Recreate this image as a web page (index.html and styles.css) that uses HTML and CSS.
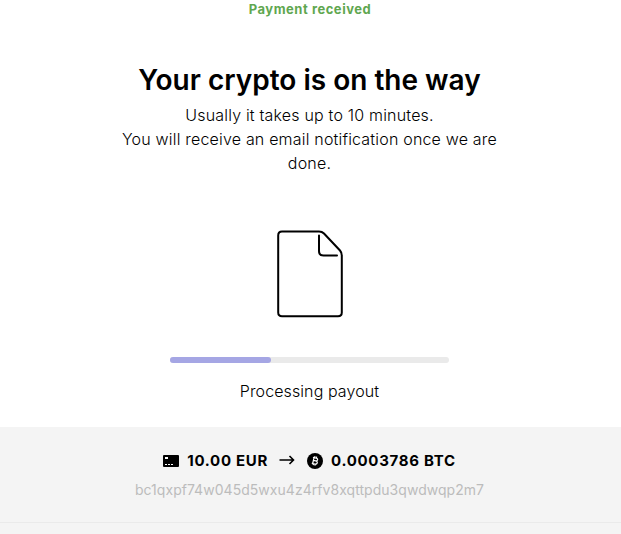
FILE: index.html
```html
<!DOCTYPE html>
<html lang="en">
<head>
    <meta charset="UTF-8">
    <meta name="viewport" content="width=device-width, initial-scale=1.0">
    <title>Payment received</title>
    <link rel="stylesheet" href="styles.css">
</head>
<body>
    <main>
        <p class="status">Payment received</p>
        <h1>Your crypto is on the way</h1>
        <p class="message">
            Usually it takes up to 10 minutes.<br>
            You will receive an email notification once we are done.
        </p>
        <svg class="document" viewBox="0 0 66 88" fill="none" stroke="#000" stroke-width="2" stroke-linecap="round">
            <path d="M5 1.500H42Q45 1.500 47 3.500L63 20.500Q64.800 22.500 64.800 25.500V82.500Q64.800 86.300 61 86.300H5Q1.200 86.300 1.200 82.500V5.500Q1.200 1.500 5 1.500Z"/>
            <path d="M42 5.500V21Q42 25.500 46.500 25.500H60"/>
        </svg>
        <div class="progress">
            <div class="bar" style="width: 36.200%"></div>
        </div>
        <p class="step">Processing payout</p>
    </main>
    <footer>
        <div class="amounts">
            <svg class="card" viewBox="0 0 16 12">
                <rect width="16" height="12" rx="1" fill="#000"/>
                <path d="M2 2h3v2H2zM2 9h2v1H2zM5 9h2v1H5zM8 9h2v1H8z" fill="#fff"/>
            </svg>
            <span class="from">10.00 EUR</span>
            <svg class="arrow" viewBox="0 0 16 12" fill="none" stroke="#000" stroke-width="1.600">
                <path d="M0.500 5H14.500M10.500 1L14.500 5L10.500 9"/>
            </svg>
            <svg class="coin" viewBox="0 0 16 16">
                <circle cx="8" cy="8" r="8" fill="#000"/>
                <path d="M6 4.300L9.300 5.100Q11 5.700 10.500 7.100Q10 8.100 8.700 7.900L6.300 7.400M8.700 7.900Q10.700 8.500 10.200 10Q9.700 11.400 7.800 11L4.800 10.300M7 4.600L5.700 10.500M8 3.200L7.700 4.700M9.700 3.600L9.400 5M6.500 10.700L6.200 12.200M8.200 11L7.900 12.600" fill="none" stroke="#fff" stroke-width="1.200"/>
            </svg>
            <span class="to">0.0003786 BTC</span>
        </div>
        <p class="address">bc1qxpf74w045d5wxu4z4rfv8xqttpdu3qwdwqp2m7</p>
    </footer>
    <div class="below"></div>
</body>
</html>
```
FILE: styles.css
```css
*, *::before, *::after{
    box-sizing: border-box;
    margin: 0;
    padding: 0;
}

body{
    font-family: Inter, "Liberation Sans", sans-serif;
    font-size: 16px;
    line-height: 24px;
    color: #000;
    background: #fff;
    height: 534px;
    overflow: hidden;
}

main{
    display: flex;
    flex-direction: column;
    align-items: center;
    height: 427px;
    padding-right: 2px;
    text-align: center;
}

.status{
    font-size: 13px;
    font-weight: 700;
    line-height: 18px;
    letter-spacing: .53px;
    padding-left: 1px;
    color: #5fa750;
}

h1{
    margin-top: 44px;
    font-size: 28px;
    font-weight: 600;
    line-height: 36px;
}

.message{
    width: 400px;
    margin-top: 5px;
    font-weight: 300;
    letter-spacing: .19px;
}

.document{
    width: 66px;
    height: 88px;
    margin-top: 55px;
}

.progress{
    width: 279px;
    height: 6px;
    margin-top: 39px;
    border-radius: 3px;
    background: #eaeaea;
}

.bar{
    height: 6px;
    border-radius: 3px;
    background: #a5a6e4;
}

.step{
    margin-top: 16px;
    font-weight: 300;
    letter-spacing: .1px;
}

footer{
    height: 96px;
    padding: 22px 2px 0 0;
    text-align: center;
    background: #f4f4f4;
    border-bottom: 1px solid #eaeaea;
}

.amounts{
    display: flex;
    justify-content: center;
    align-items: center;
    font-size: 15px;
    font-weight: 700;
    letter-spacing: .7px;
}

.card{
    width: 16px;
    height: 12px;
    margin-right: 8px;
}

.arrow{
    width: 16px;
    height: 12px;
    margin: 0 12px 0 11px;
}

.coin{
    width: 16px;
    height: 16px;
    margin-right: 8px;
}

.address{
    margin-top: 5px;
    font-size: 14px;
    line-height: 24px;
    font-weight: 400;
    letter-spacing: .04px;
    color: #bcbcbc;
}

.below{
    height: 11px;
    background: #f4f4f4;
}
```
